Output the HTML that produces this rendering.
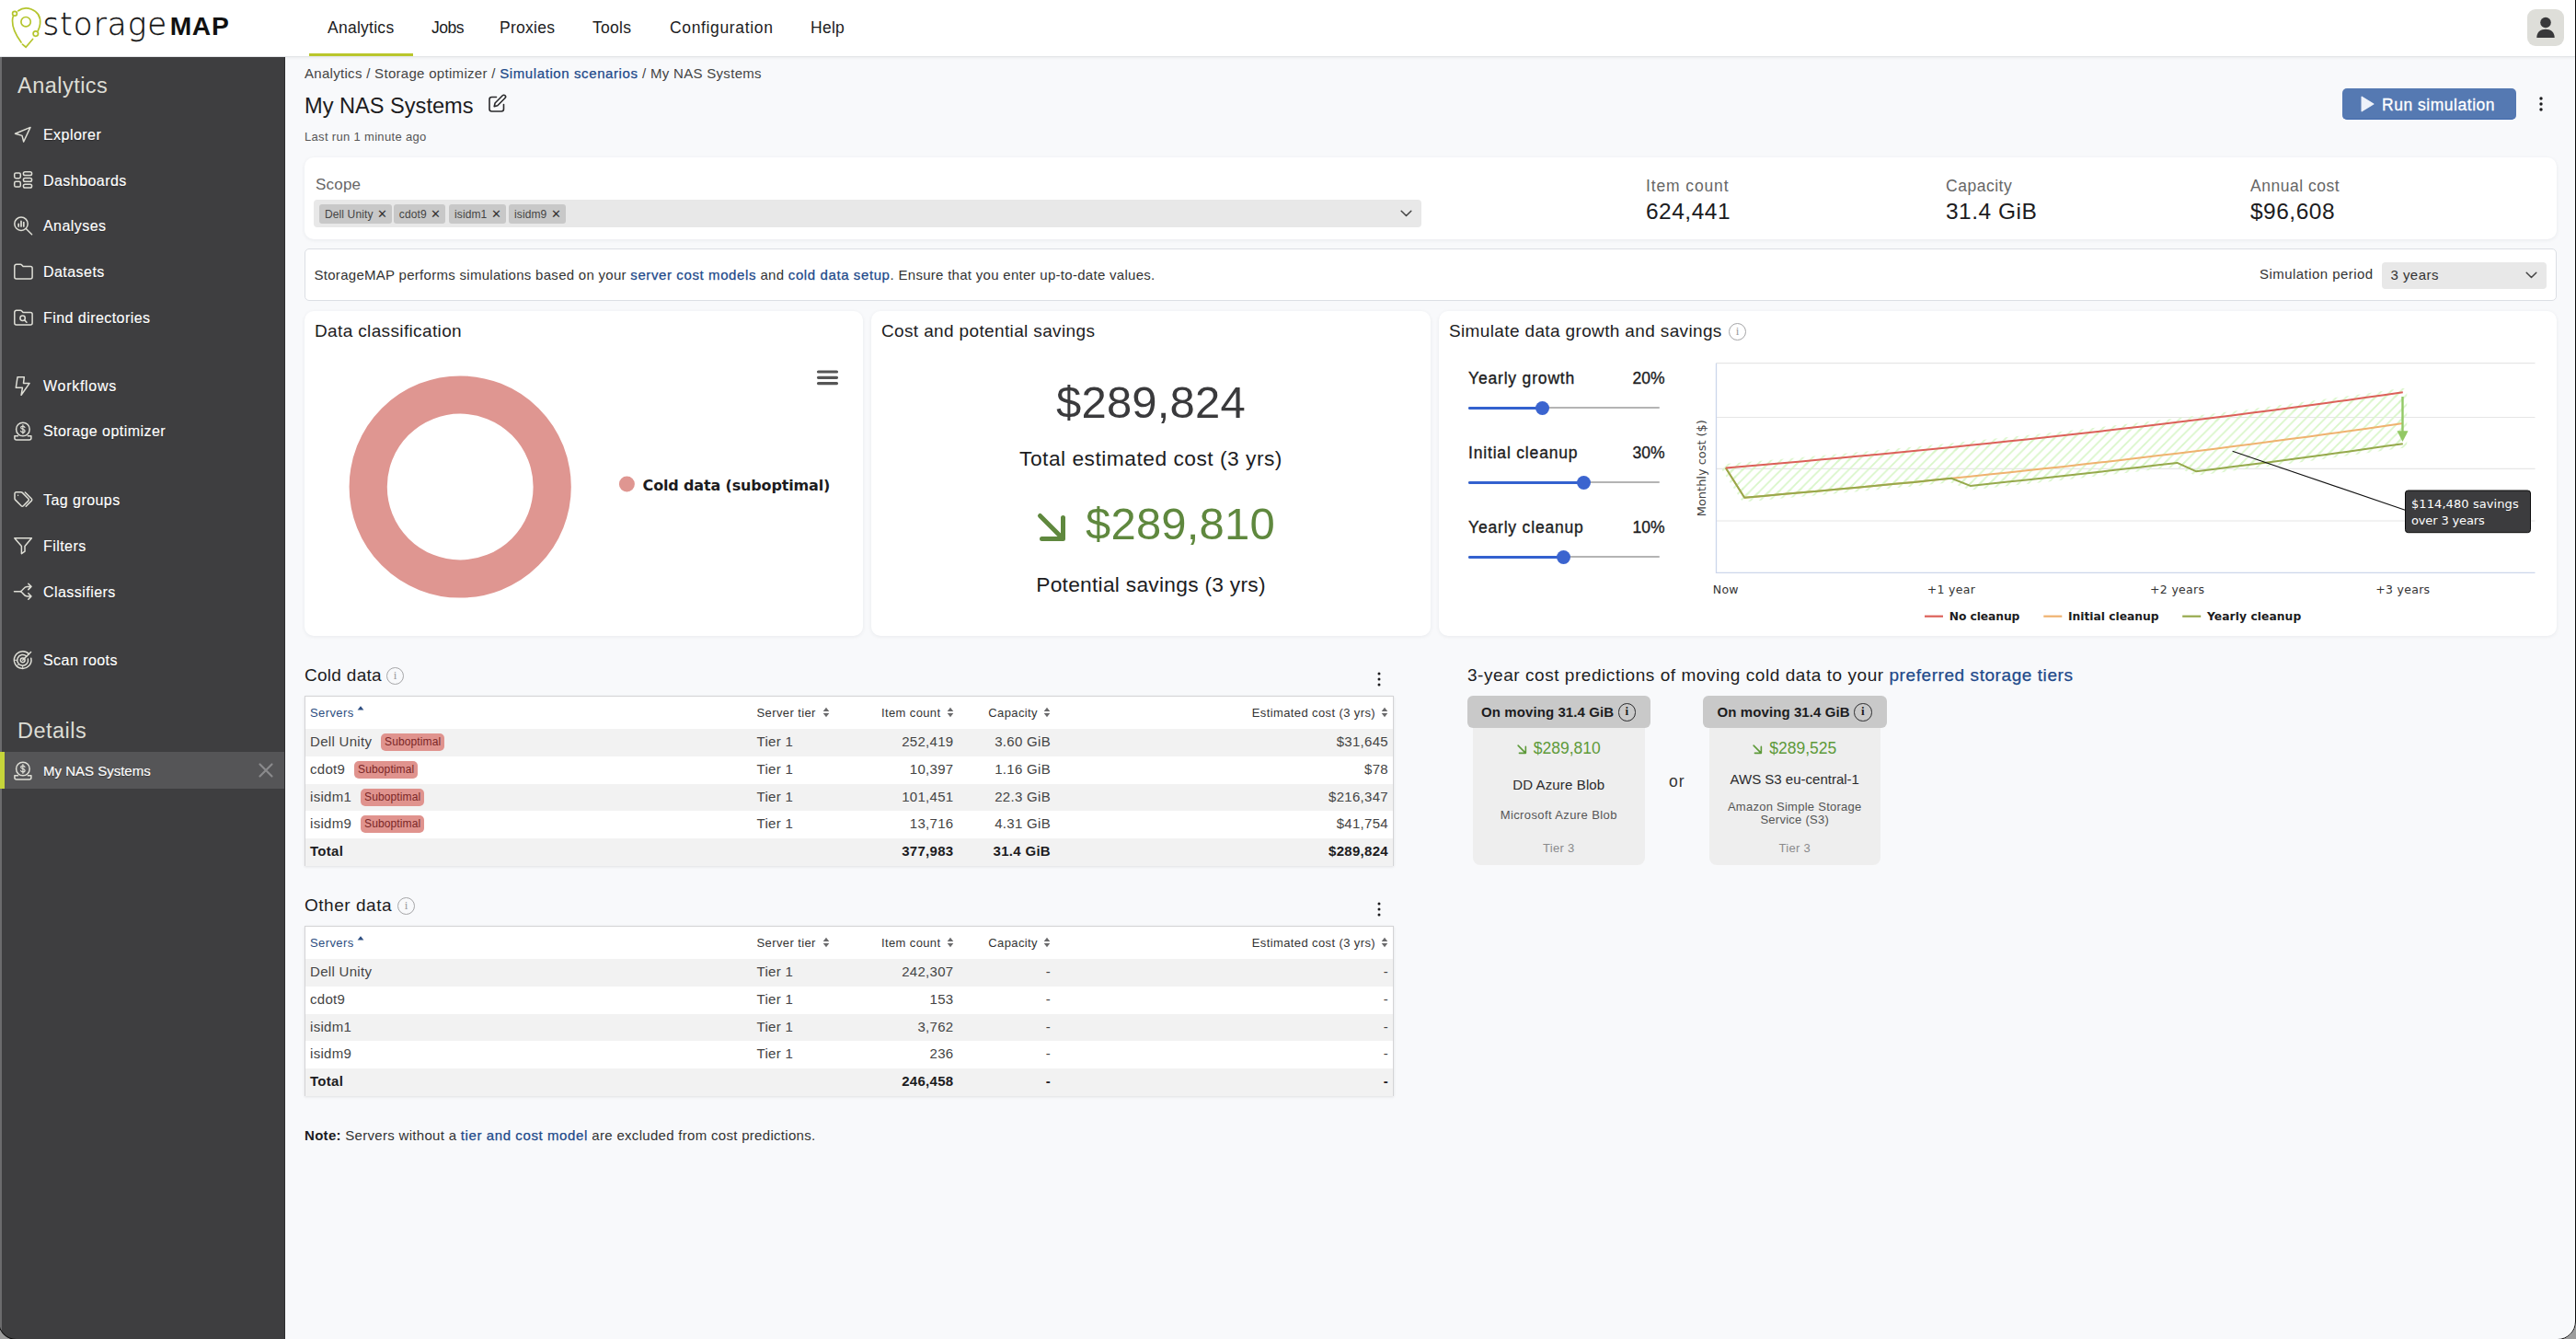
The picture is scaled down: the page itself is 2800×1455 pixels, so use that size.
<!DOCTYPE html>
<html lang="en">
<head>
<meta charset="utf-8">
<title>StorageMAP - My NAS Systems</title>
<style>
*{box-sizing:border-box;margin:0;padding:0}
html,body{width:2800px;height:1455px;overflow:hidden}
body{position:relative;background:#f8f9fb;font-family:"Liberation Sans",sans-serif;color:#1c1c1e;font-size:15px;letter-spacing:.02em}
.abs{position:absolute}
a{color:#21498a;text-decoration:none;-webkit-text-stroke:.25px #21498a;letter-spacing:.04em}
svg{display:block;overflow:visible}
/* header */
#hdr{position:absolute;left:0;top:0;width:2800px;height:62px;background:#fff;border-bottom:1px solid #e3e5e8;box-shadow:0 1px 3px rgba(0,0,0,.06)}
#logo{position:absolute;left:12px;top:8px}
#logotxt{position:absolute;left:46.500px;top:4.400px;-webkit-text-stroke:.3px #111;font-size:34px;line-height:44px;color:#111;white-space:nowrap;font-family:"DejaVu Sans Light","DejaVu Sans",sans-serif;font-weight:200;letter-spacing:1.100px}
#logotxt b{font-family:"Liberation Sans",sans-serif;font-weight:700;font-size:28.200px;letter-spacing:.7px;margin-left:2.500px;position:relative;top:.1px;-webkit-text-stroke:0}
.nav{position:absolute;top:0;height:62px;line-height:60px;font-size:17.5px;color:#1c1c1e;white-space:nowrap;letter-spacing:.015em}
#navline{position:absolute;left:336px;top:58px;width:113px;height:3.300px;background:#b9c62b}
#avatar{position:absolute;left:2747px;top:10px;width:40px;height:40px;border-radius:9px;background:#deded9}
/* sidebar */
#side{position:absolute;left:0;top:62px;width:310px;height:1393px;background:#3e3e40;border-left:2px solid #6b6b6d;border-right:1px solid #2e2e30}
.sh{position:absolute;left:17px;font-size:23.5px;color:#dcdcd4;white-space:nowrap;letter-spacing:.02em}
.si{position:absolute;left:0;width:307px;height:40px;white-space:nowrap}
.si svg{position:absolute;left:13px;top:10px;width:20px;height:20px;stroke:#deded6;fill:none;stroke-width:1.5;stroke-linecap:round;stroke-linejoin:round}
.si span{position:absolute;left:45px;top:0;line-height:42px;font-size:16px;color:#fff;letter-spacing:.028em;text-shadow:0 1px 1px rgba(0,0,0,.35);-webkit-text-stroke:.15px #fff}
.si.sel{background:#555557}
.si.sel:before{content:"";position:absolute;left:-2px;top:0;width:5px;height:40px;background:#c6d53a}

/* main */
.card{position:absolute;background:#fff;border-radius:10px;box-shadow:0 1px 4px rgba(30,40,60,.07)}
.ct{position:absolute;left:11px;top:11px;font-size:19px;line-height:22px;color:#1c1c1e;white-space:nowrap;letter-spacing:.019em}
.t{position:absolute;white-space:nowrap}
.info{position:absolute;width:19px;height:19px;border:1.3px solid #a5a5a7;border-radius:50%;color:#9a9a9c;font-family:"Liberation Serif",serif;font-size:13px;line-height:16.500px;text-align:center;letter-spacing:0}
.chip{position:absolute;top:222px;height:21px;background:#c8c8c8;border-radius:3px;font-size:12px;line-height:22.500px;color:#444;padding-left:6px;white-space:nowrap;letter-spacing:.01em}
.chip i{font-style:normal;position:absolute;right:5px;top:0;font-size:13px;color:#333}
.lbl{position:absolute;font-size:17.500px;color:#666;white-space:nowrap;letter-spacing:.03em}
.val{position:absolute;font-size:24.500px;color:#1c1c1e;white-space:nowrap;letter-spacing:.02em}

.dj{font-family:"DejaVu Sans",sans-serif;letter-spacing:0}
.sl{position:absolute;font-size:17.500px;line-height:22px;color:#1c1c1e;white-space:nowrap;letter-spacing:.047em;-webkit-text-stroke:.35px #1c1c1e}
.trk{position:absolute;left:1596px;width:208px;height:2px;background:#b4b4b4;border-radius:1px}
.trf{position:absolute;left:1596px;height:3px;background:#3361cf;border-radius:1.500px}
.thm{position:absolute;width:15px;height:15px;border-radius:50%;background:#3b64cf}

.tbl{position:absolute;left:331px;width:1183.500px;height:184.400px;background:#fff;border:1px solid #d4d4d6;box-shadow:0 1px 3px rgba(0,0,0,.10)}
.tr{position:absolute;left:0;width:1181.500px;height:29.800px;line-height:28px;font-size:15px;color:#444;white-space:nowrap;letter-spacing:.02em}
.tr.g{background:#f2f2f2}
.tr.tot{font-weight:700;color:#1c1c1e;letter-spacing:.02em}
.tr span,.th span{position:absolute;top:0}
.th{position:absolute;left:0;top:0;width:1181.500px;height:35px;line-height:35.400px;font-size:13px;color:#333;white-space:nowrap;letter-spacing:.03em}
.c1{left:5px}.c2{left:490.500px}.c3{right:477px}.c4{right:371.500px}.c5{right:4.500px}
.th .c3,.th .c4,.th .c5{padding-right:14px}
.bdg{display:inline-block;font-style:normal;margin-left:10px;height:19px;line-height:19px;width:69px;text-align:center;border-radius:5px;background:#e0938e;color:#7a2626;font-size:12px;letter-spacing:.01em;vertical-align:1px}
.srt{position:absolute;width:8px;height:12px}
.h2{position:absolute;font-size:19px;line-height:24px;color:#1c1c1e;white-space:nowrap;letter-spacing:.015em}

.th2{position:absolute;top:756px;width:199.500px;height:35px;background:#c9c9c9;border-radius:6px;z-index:2}
.th2 b{position:absolute;left:15.500px;top:0;line-height:35px;font-size:15px;color:#1c1c1e;white-space:nowrap;letter-spacing:.006em}
.tb2{position:absolute;top:786px;width:186.500px;height:154px;background:#eeeeee;border-radius:0 0 8px 8px}
.tc{position:absolute;left:0;width:100%;text-align:center;white-space:nowrap}
.info.dk{border-color:#2a2a2c;color:#1c1c1e;border-width:1.400px;width:19.500px;height:19.500px;font-weight:700;font-size:13px}
</style>
</head>
<body>
<!--HEADER-->
<div id="hdr">
  <svg id="logo" width="34" height="46" viewBox="0 0 34 46" fill="none" stroke="#b4c52d" stroke-width="1.700" stroke-linecap="round">
    <path d="M7.800 3.800C11.500 1 17 .1 22 2c7 2.700 10.300 8.800 9.600 15.800c-.3 2.800-1.100 5.300-2.300 7.500"/>
    <path d="M23.600 34.500L16.100 43.200L12.400 40.100"/>
    <path d="M11 38C5.500 30.500 1.300 22.500 1.500 14.500c0-1.700.3-3.300.8-4.700"/>
    <circle cx="4" cy="6.800" r="2.400"/>
    <circle cx="16.100" cy="15.700" r="5.200"/>
    <circle cx="26.800" cy="28.600" r="2.700"/>
  </svg>
  <div id="logotxt"><span class="thin">storage</span><b>MAP</b></div>
  <div class="nav" style="left:356px">Analytics</div>
  <div class="nav" style="left:469px;letter-spacing:-.03em">Jobs</div>
  <div class="nav" style="left:543px">Proxies</div>
  <div class="nav" style="left:644px">Tools</div>
  <div class="nav" style="left:728px;letter-spacing:.037em">Configuration</div>
  <div class="nav" style="left:881px">Help</div>
  <div id="navline"></div>
  <div id="avatar"><svg width="40" height="40" viewBox="0 0 40 40"><circle cx="20" cy="14.500" r="5.800" fill="#38383a"/><path d="M10.300 31c0-6.300 4.200-9.300 9.700-9.300s9.700 3 9.700 9.300z" fill="#38383a"/></svg></div>
</div>
<!--SIDEBAR-->
<div id="side">
<div class="sh" style="top:18px">Analytics</div>
  <div class="si" style="top:64.2px"><svg viewBox="0 0 20 20"><path d="M18 2.400L1.500 9.200L9 11.400L10.700 18Z"/></svg><span>Explorer</span></div>
  <div class="si" style="top:113.6px"><svg viewBox="0 0 20 20"><rect x=".7" y="1.900" width="6.600" height="5.800" rx="1.600"/><rect x=".7" y="11.300" width="6.600" height="5.800" rx="1.600"/><rect x="10.400" y=".8" width="9.200" height="3.700" rx="1.800"/><rect x="10.400" y="7.600" width="9.200" height="3.700" rx="1.800"/><rect x="10.400" y="14.300" width="9.200" height="3.700" rx="1.800"/></svg><span>Dashboards</span></div>
  <div class="si" style="top:163.3px"><svg viewBox="0 0 20 20"><circle cx="8" cy="8.200" r="7.200"/><path d="M13.300 13.500L19.600 19.800"/><path d="M5.200 11V8.300M8 11V5.400M10.800 11V6.600" stroke-width="1.700"/></svg><span>Analyses</span></div>
  <div class="si" style="top:213.0px"><svg viewBox="0 0 20 20"><path d="M.8 16V4.300a2 2 0 0 1 2-2h4.400a2 2 0 0 1 1.500.7l1.400 1.600h8a2 2 0 0 1 2 2V16a2 2 0 0 1-2 2H2.800a2 2 0 0 1-2-2z"/></svg><span>Datasets</span></div>
  <div class="si" style="top:262.6px"><svg viewBox="0 0 20 20"><path d="M.8 16V4.300a2 2 0 0 1 2-2h4.400a2 2 0 0 1 1.500.7l1.400 1.600h8a2 2 0 0 1 2 2V16a2 2 0 0 1-2 2H2.800a2 2 0 0 1-2-2z"/><circle cx="9.600" cy="10.800" r="2.700"/><path d="M11.700 12.900L14 15.200"/></svg><span>Find directories</span></div>
  <div class="si" style="top:336.5px"><svg viewBox="0 0 20 20"><path d="M4 .8H11.300L10.500 7.400H17.100L8.100 20.300L9.400 12.300H2.300Z"/></svg><span style="letter-spacing:.045em">Workflows</span></div>
  <div class="si" style="top:386.3px"><svg viewBox="0 0 20 20"><circle cx="9.900" cy="8.500" r="7.300"/><path d="M.9 15.700v2.300a2 2 0 0 0 2 2h14a2 2 0 0 0 2-2v-2.300M.9 15.700H4.500M15.300 15.700H18.900"/><path d="M12 6.500c-.4-1-1.200-1.400-2.200-1.400-1.200 0-2.100.6-2.100 1.600 0 2.300 4.400 1 4.400 3.500 0 1-.9 1.700-2.200 1.700-1.100 0-2-.5-2.300-1.500M9.900 3.700v9.600" stroke-width="1.200"/></svg><span>Storage optimizer</span></div>
  <div class="si" style="top:461.0px"><svg viewBox="0 0 20 20"><path d="M1 3.500v5.200a2 2 0 0 0 .6 1.400l6.600 6.600a1.500 1.500 0 0 0 2.100 0l5.600-5.600a1.500 1.500 0 0 0 0-2.100L9.300 2.400a2 2 0 0 0-1.400-.6H2.700A1.700 1.700 0 0 0 1 3.500z"/><path d="M12.300 2l7 7a1.500 1.500 0 0 1 0 2.100l-6.100 6.100"/><circle cx="4.600" cy="5.300" r=".7" fill="#deded6" stroke="none"/></svg><span>Tag groups</span></div>
  <div class="si" style="top:511.0px"><svg viewBox="0 0 20 20"><path d="M.8 1.800H19.400L12 10.600V16.200L8.400 18.600V10.600Z"/></svg><span>Filters</span></div>
  <div class="si" style="top:561.0px"><svg viewBox="0 0 20 20"><path d="M.5 9.700H6.500M6.500 9.700C10.500 9.700 10 4.400 14.500 4.400H19M6.500 9.700C10.500 9.700 10 15 14.500 15H19M15.800 1.200L19 4.400L15.800 7.600M15.800 11.800L19 15L15.800 18.200"/></svg><span>Classifiers</span></div>
  <div class="si" style="top:635.3px"><svg viewBox="0 0 20 20"><path d="M16.500 3.800A9.300 9.300 0 1 0 18.800 8.300"/><path d="M13.800 6.200A5.900 5.900 0 1 0 15.400 9"/><circle cx="9.700" cy="10.300" r="2.400"/><path d="M9.700 10.300L18.600 1.500"/><path d="M9.700 19.600v-2.500M.4 10.300h2.500M3.200 16.800l1.700-1.700" stroke-width="1"/></svg><span>Scan roots</span></div>
  <div class="sh" style="top:718.700px">Details</div>
  <div class="si sel" style="top:754.700px"><svg viewBox="0 0 20 20"><circle cx="9.900" cy="8.500" r="7.300"/><path d="M.9 15.700v2.300a2 2 0 0 0 2 2h14a2 2 0 0 0 2-2v-2.300M.9 15.700H4.500M15.300 15.700H18.900"/><path d="M12 6.500c-.4-1-1.200-1.400-2.200-1.400-1.200 0-2.100.6-2.100 1.600 0 2.300 4.400 1 4.400 3.500 0 1-.9 1.700-2.200 1.700-1.100 0-2-.5-2.300-1.500M9.900 3.700v9.600" stroke-width="1.200"/></svg><span style="font-size:15px;letter-spacing:0">My NAS Systems</span><svg style="left:279px;top:12px;width:16px;height:16px;stroke:#8a8a8c;stroke-width:2.200" viewBox="0 0 16 16"><path d="M1.500 1.500L14.500 14.500M14.500 1.500L1.500 14.500"/></svg></div>
</div>
<!--MAIN-->
<div id="main">
  <div class="t" style="left:331px;top:70px;font-size:15px;line-height:20px;color:#444;letter-spacing:.02em">Analytics / Storage optimizer / <a>Simulation scenarios</a> / My NAS Systems</div>
  <div class="t" style="left:331px;top:100px;font-size:23.600px;line-height:30px;color:#1c1c1e;letter-spacing:0">My NAS Systems</div>
  <svg class="abs" style="left:530px;top:102px" width="21" height="21" viewBox="0 0 21 21" fill="none" stroke="#2a2a2c" stroke-width="1.600" stroke-linecap="round" stroke-linejoin="round"><path d="M9.500 3.500H4.500a2.500 2.500 0 0 0-2.500 2.500v10.500a2.500 2.500 0 0 0 2.500 2.500h10.500a2.500 2.500 0 0 0 2.500-2.500v-5"/><path d="M16.300 1.800a1.900 1.900 0 0 1 2.700 2.700l-8.200 8.200-3.600.9.900-3.600z"/></svg>
  <div class="t" style="left:331px;top:140px;font-size:13px;line-height:18px;color:#555;letter-spacing:.025em">Last run 1 minute ago</div>
  <div class="abs" style="left:2546px;top:96px;width:189px;height:34px;background:#5579b2;border-radius:5px;border-bottom:1.500px solid #3f68ad"></div>
  <svg class="abs" style="left:2566px;top:104px" width="15" height="18" viewBox="0 0 15 18"><path d="M1.200 1.300v15.400L13.800 9z" fill="#eef2fa" stroke="#eef2fa" stroke-width="1.400" stroke-linejoin="round"/></svg>
  <div class="t" style="left:2589px;top:97.300px;font-size:17.500px;line-height:34px;color:#fff;letter-spacing:.03em;-webkit-text-stroke:.3px #fff">Run simulation</div>
  <svg class="abs" style="left:2759px;top:104px" width="6" height="18" viewBox="0 0 6 18" fill="#1c1c1e"><circle cx="3" cy="3" r="1.700"/><circle cx="3" cy="9" r="1.700"/><circle cx="3" cy="15" r="1.700"/></svg>
  <!-- scope card -->
  <div class="card" style="left:331px;top:171px;width:2448px;height:89px"></div>
  <div class="lbl" style="left:343px;top:190px;line-height:22px;letter-spacing:.012em;font-size:17px">Scope</div>
  <div class="abs" style="left:341px;top:217px;width:1204px;height:30px;background:#e8e8e8;border-radius:4px"></div>
  <div class="chip" style="left:347px;width:79px">Dell Unity<i>&#x2715;</i></div>
  <div class="chip" style="left:427.800px;width:56.500px">cdot9<i>&#x2715;</i></div>
  <div class="chip" style="left:488px;width:62px">isidm1<i>&#x2715;</i></div>
  <div class="chip" style="left:553px;width:62px">isidm9<i>&#x2715;</i></div>
  <svg class="abs" style="left:1522px;top:228px" width="13" height="8" viewBox="0 0 13 8" fill="none" stroke="#444" stroke-width="1.500" stroke-linecap="round" stroke-linejoin="round"><path d="M1.200 1.200L6.500 6.500L11.800 1.200"/></svg>
  <div class="lbl" style="left:1789px;top:191px;line-height:22px;letter-spacing:.05em">Item count</div>
  <div class="val" style="left:1789px;top:215px;line-height:30px">624,441</div>
  <div class="lbl" style="left:2115px;top:191px;line-height:22px">Capacity</div>
  <div class="val" style="left:2115px;top:215px;line-height:30px">31.4 GiB</div>
  <div class="lbl" style="left:2446px;top:191px;line-height:22px">Annual cost</div>
  <div class="val" style="left:2446px;top:215px;line-height:30px">$96,608</div>
  <!-- info bar -->
  <div class="abs" style="left:331px;top:269.600px;width:2448px;height:57px;background:#fff;border:1px solid #dcdfe4;border-radius:5px"></div>
  <div class="t" style="left:341.500px;top:288.600px;font-size:15px;line-height:20px;color:#333;letter-spacing:.019em">StorageMAP performs simulations based on your <a>server cost models</a> and <a>cold data setup</a>. Ensure that you enter up-to-date values.</div>
  <div class="t" style="left:2456px;top:288px;font-size:15px;line-height:20px;color:#333;letter-spacing:.03em">Simulation period</div>
  <div class="abs" style="left:2589px;top:284.500px;width:179px;height:29px;background:#e8e8e8;border-radius:4px"></div>
  <div class="t" style="left:2598.500px;top:289px;font-size:15px;line-height:20px;color:#333;letter-spacing:.03em">3 years</div>
  <svg class="abs" style="left:2745px;top:295px" width="13" height="8" viewBox="0 0 13 8" fill="none" stroke="#444" stroke-width="1.500" stroke-linecap="round" stroke-linejoin="round"><path d="M1.200 1.200L6.500 6.500L11.800 1.200"/></svg>

  <!-- card 1 -->
  <div class="card" style="left:331px;top:338px;width:607px;height:353px"><div class="ct">Data classification</div></div>
  <svg class="abs" style="left:331px;top:338px" width="607" height="353" viewBox="331 338 607 353">
    <circle cx="500.200" cy="529" r="100" fill="none" stroke="#df9691" stroke-width="41.200"/>
    <path d="M889.500 404h20M889.500 410.300h20M889.500 416.600h20" stroke="#555" stroke-width="3.200" stroke-linecap="round"/>
    <circle cx="681.400" cy="526" r="8.500" fill="#df9691"/>
    <text x="698.600" y="532.800" font-family="DejaVu Sans, sans-serif" font-weight="700" font-size="16" fill="#1c1c1e" textLength="204" lengthAdjust="spacing">Cold data (suboptimal)</text>
  </svg>
  <!-- card 2 -->
  <div class="card" style="left:947px;top:338px;width:608px;height:353px"><div class="ct">Cost and potential savings</div></div>
  <div class="t" style="left:947px;width:608px;text-align:center;top:407px;font-size:49px;line-height:60px;color:#3a3a3c;letter-spacing:.004em">$289,824</div>
  <div class="t" style="left:947px;width:608px;text-align:center;top:483px;font-size:22.750px;line-height:30px;color:#1c1c1e;letter-spacing:.022em">Total estimated cost (3 yrs)</div>
  <svg class="abs" style="left:1127px;top:557px" width="33" height="33" viewBox="0 0 33 33" fill="none" stroke="#5f883e" stroke-width="5" stroke-linecap="round" stroke-linejoin="round"><path d="M3.500 3.500L27.500 27.500M5.500 28.500H28.500V5.500"/></svg>
  <div class="t" style="left:1180px;top:539px;font-size:49px;line-height:60px;color:#5f883e;letter-spacing:.004em">$289,810</div>
  <div class="t" style="left:947px;width:608px;text-align:center;top:620px;font-size:22.750px;line-height:30px;color:#1c1c1e;letter-spacing:.012em">Potential savings (3 yrs)</div>
  <!-- card 3 -->
  <div class="card" style="left:1564px;top:338px;width:1215px;height:353px"><div class="ct">Simulate data growth and savings</div><div class="info" style="left:315px;top:13px">i</div></div>
  <div class="sl" style="left:1596px;top:400px">Yearly growth</div><div class="sl" style="left:1700px;width:109.500px;text-align:right;letter-spacing:0;top:400px">20%</div>
  <div class="trk" style="top:442.3px"></div><div class="trf" style="top:442.100px;width:80px"></div><div class="thm" style="left:1668.800px;top:436.100px"></div>
  <div class="sl" style="left:1596px;top:480.500px">Initial cleanup</div><div class="sl" style="left:1700px;width:109.500px;text-align:right;letter-spacing:0;top:480.500px">30%</div>
  <div class="trk" style="top:523.0px"></div><div class="trf" style="top:522.800px;width:125px"></div><div class="thm" style="left:1713.500px;top:516.800px"></div>
  <div class="sl" style="left:1596px;top:561.500px">Yearly cleanup</div><div class="sl" style="left:1700px;width:109.500px;text-align:right;letter-spacing:0;top:561.500px">10%</div>
  <div class="trk" style="top:603.7px"></div><div class="trf" style="top:603.500px;width:103px"></div><div class="thm" style="left:1692px;top:597.500px"></div>
  <svg class="abs" style="left:1564px;top:338px" width="1215" height="353" viewBox="1564 338 1215 353">
    <defs><pattern id="hatch" patternUnits="userSpaceOnUse" width="10.500" height="10.500"><path d="M-1 11.500L11.500 -1M-6.250 6.250L6.250 -6.250M4.250 16.750L16.750 4.250" stroke="#d9f6c9" stroke-width="1.800" fill="none"/></pattern></defs>
    <g stroke="#e6e6e6" stroke-width="1.200"><path d="M1865.300 394.700H2755.500M1865.300 453.500H2755.500M1865.300 509.300H2755.500M1865.300 566H2755.500"/></g>
    <path d="M1865.500 394.700V622.300H2755.500" fill="none" stroke="#ccd6eb" stroke-width="1.300"/>
    <polygon points="1875.8,508.5 1896.2,506.8 1916.7,505.0 1937.1,503.2 1957.6,501.4 1978.0,499.6 1998.5,497.7 2018.9,495.8 2039.4,493.9 2059.8,491.9 2080.2,490.0 2100.7,487.9 2121.1,485.9 2141.6,483.8 2162.0,481.7 2182.5,479.6 2202.9,477.4 2223.4,475.2 2243.8,473.0 2264.2,470.7 2284.7,468.4 2305.1,466.0 2325.6,463.7 2346.0,461.2 2366.5,458.8 2386.9,456.3 2407.3,453.8 2427.8,451.2 2448.2,448.6 2468.7,445.9 2489.1,443.2 2509.6,440.5 2530.0,437.7 2550.5,434.9 2570.9,432.1 2591.3,429.2 2611.8,426.2 2611.8,482.2 2591.3,485.1 2570.9,488.0 2550.5,490.9 2530.0,493.7 2509.6,496.5 2489.1,499.2 2468.7,501.9 2448.2,504.5 2427.8,507.1 2407.3,509.7 2386.9,512.2 2366.5,502.9 2346.0,505.3 2325.6,507.7 2305.1,510.1 2284.7,512.4 2264.2,514.8 2243.8,517.0 2223.4,519.3 2202.9,521.5 2182.5,523.6 2162.0,525.8 2141.6,527.9 2121.1,519.8 2100.7,521.8 2080.2,523.9 2059.8,525.8 2039.4,527.8 2018.9,529.7 1998.5,531.6 1978.0,533.5 1957.6,535.3 1937.1,537.1 1916.7,538.9 1896.2,540.7 1875.8,508.5" fill="url(#hatch)" stroke="url(#hatch)" stroke-width="9" stroke-linejoin="round"/>
    <polyline points="1875.8,508.5 1896.2,540.7 1916.7,538.9 1937.1,537.1 1957.6,535.3 1978.0,533.5 1998.5,531.6 2018.9,529.7 2039.4,527.8 2059.8,525.8 2080.2,523.9 2100.7,521.8 2121.1,519.8 2141.6,517.7 2162.0,515.6 2182.5,513.5 2202.9,511.3 2223.4,509.1 2243.8,506.9 2264.2,504.6 2284.7,502.3 2305.1,499.9 2325.6,497.6 2346.0,495.1 2366.5,492.7 2386.9,490.2 2407.3,487.7 2427.8,485.1 2448.2,482.5 2468.7,479.8 2489.1,477.1 2509.6,474.4 2530.0,471.6 2550.5,468.8 2570.9,466.0 2591.3,463.1 2611.8,460.1" fill="none" stroke="#efb26f" stroke-width="2" stroke-linejoin="round"/>
    <polyline points="1875.8,508.5 1896.2,540.7 1916.7,538.9 1937.1,537.1 1957.6,535.3 1978.0,533.5 1998.5,531.6 2018.9,529.7 2039.4,527.8 2059.8,525.8 2080.2,523.9 2100.7,521.8 2121.1,519.8 2141.6,527.9 2162.0,525.8 2182.5,523.6 2202.9,521.5 2223.4,519.3 2243.8,517.0 2264.2,514.8 2284.7,512.4 2305.1,510.1 2325.6,507.7 2346.0,505.3 2366.5,502.9 2386.9,512.2 2407.3,509.7 2427.8,507.1 2448.2,504.5 2468.7,501.9 2489.1,499.2 2509.6,496.5 2530.0,493.7 2550.5,490.9 2570.9,488.0 2591.3,485.1 2611.8,482.2" fill="none" stroke="#96a94c" stroke-width="2" stroke-linejoin="round"/>
    <polyline points="1875.8,508.5 1896.2,506.8 1916.7,505.0 1937.1,503.2 1957.6,501.4 1978.0,499.6 1998.5,497.7 2018.9,495.8 2039.4,493.9 2059.8,491.9 2080.2,490.0 2100.7,487.9 2121.1,485.9 2141.6,483.8 2162.0,481.7 2182.5,479.6 2202.9,477.4 2223.4,475.2 2243.8,473.0 2264.2,470.7 2284.7,468.4 2305.1,466.0 2325.6,463.7 2346.0,461.2 2366.5,458.8 2386.9,456.3 2407.3,453.8 2427.8,451.2 2448.2,448.6 2468.7,445.9 2489.1,443.2 2509.6,440.5 2530.0,437.7 2550.5,434.9 2570.9,432.1 2591.3,429.2 2611.8,426.2" fill="none" stroke="#dc6059" stroke-width="2" stroke-linejoin="round"/>
    <path d="M2611.500 431V470" stroke="#93c865" stroke-width="2.400"/><path d="M2605.500 468.300H2617.500L2611.500 480Z" fill="#93c865"/>
    <path d="M2426.600 490.300L2615 554.500" stroke="#111" stroke-width="1.100"/>
    <rect x="2614.500" y="533" width="136" height="45.700" rx="3" fill="#3c3c3e" stroke="#0c0c0c" stroke-width="1"/>
    <g font-family="DejaVu Sans, sans-serif" font-size="13" fill="#fff"><text x="2621" y="552" textLength="117" lengthAdjust="spacing">$114,480 savings</text><text x="2621" y="569.800" textLength="80" lengthAdjust="spacing">over 3 years</text></g>
    <g font-family="DejaVu Sans, sans-serif" font-size="12.500" fill="#333" text-anchor="middle"><text x="1875.800" y="645">Now</text><text x="2121" y="645">+1 year</text><text x="2366.700" y="645">+2 years</text><text x="2611.800" y="645">+3 years</text></g>
    <text transform="translate(1853.500 508.500) rotate(-90)" text-anchor="middle" font-family="DejaVu Sans, sans-serif" font-size="13" fill="#444" textLength="105.500" lengthAdjust="spacing">Monthly cost ($)</text>
    <g stroke-width="2.200"><path d="M2092 669.700h20" stroke="#dc6059"/><path d="M2221.300 669.700h20" stroke="#efb26f"/><path d="M2372.200 669.700h20" stroke="#96a94c"/></g>
    <g font-family="DejaVu Sans, sans-serif" font-weight="700" font-size="12.300" fill="#1c1c1e"><text x="2118.700" y="674" textLength="77" lengthAdjust="spacing">No cleanup</text><text x="2247.900" y="674" textLength="99" lengthAdjust="spacing">Initial cleanup</text><text x="2399" y="674" textLength="102.500" lengthAdjust="spacing">Yearly cleanup</text></g>
  </svg>
  <!-- cold data -->
  <div class="h2" style="left:331px;top:722px">Cold data</div><div class="info" style="left:420px;top:724.500px">i</div>
  <svg class="abs" style="left:1496px;top:730px" width="6" height="16" viewBox="0 0 6 16" fill="#1c1c1e"><circle cx="3" cy="2" r="1.500"/><circle cx="3" cy="8" r="1.500"/><circle cx="3" cy="14" r="1.500"/></svg>
  <div class="tbl" style="top:756.300px">
    <div class="th"><span class="c1" style="color:#2c4d80">Servers</span><svg class="srt" style="left:56px;top:9px" viewBox="0 0 8 12"><path d="M4 1.200L7.400 5.500H.6z" fill="#2c4d80"/></svg><span class="c2">Server tier</span><svg class="srt" style="left:562px;top:11px" viewBox="0 0 8 12"><path d="M4 .8L7.300 5H.7zM4 11.200L7.300 7H.7z" fill="#6a6a6c"/></svg><span class="c3">Item count</span><svg class="srt" style="right:477px;top:11px" viewBox="0 0 8 12"><path d="M4 .8L7.300 5H.7zM4 11.200L7.300 7H.7z" fill="#6a6a6c"/></svg><span class="c4">Capacity</span><svg class="srt" style="right:371.5px;top:11px" viewBox="0 0 8 12"><path d="M4 .8L7.300 5H.7zM4 11.200L7.300 7H.7z" fill="#6a6a6c"/></svg><span class="c5">Estimated cost (3 yrs)</span><svg class="srt" style="right:4.5px;top:11px" viewBox="0 0 8 12"><path d="M4 .8L7.300 5H.7zM4 11.200L7.300 7H.7z" fill="#6a6a6c"/></svg></div>
    <div class="tr g" style="top:34.7px"><span class="c1">Dell Unity<i class="bdg">Suboptimal</i></span><span class="c2">Tier 1</span><span class="c3">252,419</span><span class="c4">3.60 GiB</span><span class="c5">$31,645</span></div>
    <div class="tr" style="top:64.5px"><span class="c1">cdot9<i class="bdg">Suboptimal</i></span><span class="c2">Tier 1</span><span class="c3">10,397</span><span class="c4">1.16 GiB</span><span class="c5">$78</span></div>
    <div class="tr g" style="top:94.3px"><span class="c1">isidm1<i class="bdg">Suboptimal</i></span><span class="c2">Tier 1</span><span class="c3">101,451</span><span class="c4">22.3 GiB</span><span class="c5">$216,347</span></div>
    <div class="tr" style="top:124.1px"><span class="c1">isidm9<i class="bdg">Suboptimal</i></span><span class="c2">Tier 1</span><span class="c3">13,716</span><span class="c4">4.31 GiB</span><span class="c5">$41,754</span></div>
    <div class="tr g tot" style="top:153.9px"><span class="c1">Total</span><span class="c2"></span><span class="c3">377,983</span><span class="c4">31.4 GiB</span><span class="c5">$289,824</span></div>
  </div>
  <!-- other data -->
  <div class="h2" style="left:331px;top:972px;letter-spacing:.028em">Other data</div><div class="info" style="left:432px;top:975px">i</div>
  <svg class="abs" style="left:1496px;top:980px" width="6" height="16" viewBox="0 0 6 16" fill="#1c1c1e"><circle cx="3" cy="2" r="1.500"/><circle cx="3" cy="8" r="1.500"/><circle cx="3" cy="14" r="1.500"/></svg>
  <div class="tbl" style="top:1006.400px">
    <div class="th"><span class="c1" style="color:#2c4d80">Servers</span><svg class="srt" style="left:56px;top:9px" viewBox="0 0 8 12"><path d="M4 1.200L7.400 5.500H.6z" fill="#2c4d80"/></svg><span class="c2">Server tier</span><svg class="srt" style="left:562px;top:11px" viewBox="0 0 8 12"><path d="M4 .8L7.300 5H.7zM4 11.200L7.300 7H.7z" fill="#6a6a6c"/></svg><span class="c3">Item count</span><svg class="srt" style="right:477px;top:11px" viewBox="0 0 8 12"><path d="M4 .8L7.300 5H.7zM4 11.200L7.300 7H.7z" fill="#6a6a6c"/></svg><span class="c4">Capacity</span><svg class="srt" style="right:371.5px;top:11px" viewBox="0 0 8 12"><path d="M4 .8L7.300 5H.7zM4 11.200L7.300 7H.7z" fill="#6a6a6c"/></svg><span class="c5">Estimated cost (3 yrs)</span><svg class="srt" style="right:4.5px;top:11px" viewBox="0 0 8 12"><path d="M4 .8L7.300 5H.7zM4 11.200L7.300 7H.7z" fill="#6a6a6c"/></svg></div>
    <div class="tr g" style="top:34.7px"><span class="c1">Dell Unity</span><span class="c2">Tier 1</span><span class="c3">242,307</span><span class="c4">-</span><span class="c5">-</span></div>
    <div class="tr" style="top:64.5px"><span class="c1">cdot9</span><span class="c2">Tier 1</span><span class="c3">153</span><span class="c4">-</span><span class="c5">-</span></div>
    <div class="tr g" style="top:94.3px"><span class="c1">isidm1</span><span class="c2">Tier 1</span><span class="c3">3,762</span><span class="c4">-</span><span class="c5">-</span></div>
    <div class="tr" style="top:124.1px"><span class="c1">isidm9</span><span class="c2">Tier 1</span><span class="c3">236</span><span class="c4">-</span><span class="c5">-</span></div>
    <div class="tr g tot" style="top:153.9px"><span class="c1">Total</span><span class="c2"></span><span class="c3">246,458</span><span class="c4">-</span><span class="c5">-</span></div>
  </div>
  <div class="t" style="left:331px;top:1224px;font-size:15px;line-height:20px;color:#333;letter-spacing:.02em"><b style="color:#1c1c1e">Note:</b> Servers without a <a>tier and cost model</a> are excluded from cost predictions.</div>
  <!-- tier cards -->
  <div class="h2" style="left:1595px;top:722px;letter-spacing:.029em">3-year cost predictions of moving cold data to your <a style="letter-spacing:.03em">preferred storage tiers</a></div>
  <div class="th2" style="left:1594.500px"><b>On moving 31.4 GiB</b><div class="info dk" style="left:164px;top:8px">i</div></div>
  <div class="tb2" style="left:1601px">
    <div class="tc" style="top:15px;font-size:17.500px;line-height:24px;color:#5e9a3a;letter-spacing:0"><svg style="display:inline-block;vertical-align:-.5px;margin-right:7.500px" width="10.500" height="10.500" viewBox="0 0 11 11" fill="none" stroke="#5e9a3a" stroke-width="1.700" stroke-linecap="round" stroke-linejoin="round"><path d="M1.200 1.200L9.500 9.500M2.500 9.800H9.800V2.500"/></svg>$289,810</div>
    <div class="tc" style="top:55.800px;font-size:15px;line-height:22px;color:#2a2a2c;letter-spacing:.009em">DD Azure Blob</div>
    <div class="tc" style="top:92.200px;font-size:13px;line-height:16px;color:#555;letter-spacing:.03em">Microsoft Azure Blob</div>
    <div class="tc" style="top:128.200px;font-size:13px;line-height:16px;color:#8a8a8c;letter-spacing:.02em">Tier 3</div>
  </div>
  <div class="t" style="left:1814px;top:838px;font-size:17.500px;letter-spacing:.06em;line-height:22px;color:#333">or</div>
  <div class="th2" style="left:1851px"><b>On moving 31.4 GiB</b><div class="info dk" style="left:164px;top:8px">i</div></div>
  <div class="tb2" style="left:1857.500px">
    <div class="tc" style="top:15px;font-size:17.500px;line-height:24px;color:#5e9a3a;letter-spacing:0"><svg style="display:inline-block;vertical-align:-.5px;margin-right:7.500px" width="10.500" height="10.500" viewBox="0 0 11 11" fill="none" stroke="#5e9a3a" stroke-width="1.700" stroke-linecap="round" stroke-linejoin="round"><path d="M1.200 1.200L9.500 9.500M2.500 9.800H9.800V2.500"/></svg>$289,525</div>
    <div class="tc" style="top:50.200px;font-size:15px;line-height:22px;color:#2a2a2c;letter-spacing:0">AWS S3 eu-central-1</div>
    <div class="tc" style="top:84px;font-size:13px;line-height:14.300px;color:#555;letter-spacing:.02em">Amazon Simple Storage<br>Service (S3)</div>
    <div class="tc" style="top:128.200px;font-size:13px;line-height:16px;color:#8a8a8c;letter-spacing:.02em">Tier 3</div>
  </div>
<!--MAIN4-->
</div>
<div class="abs" style="left:-2px;top:-30px;width:2802px;height:1486px;border-radius:0 0 20px 20px;box-shadow:0 0 0 40px #9c9c9c;border:1.300px solid #0c0c0c;z-index:50"></div>
</body>
</html>
